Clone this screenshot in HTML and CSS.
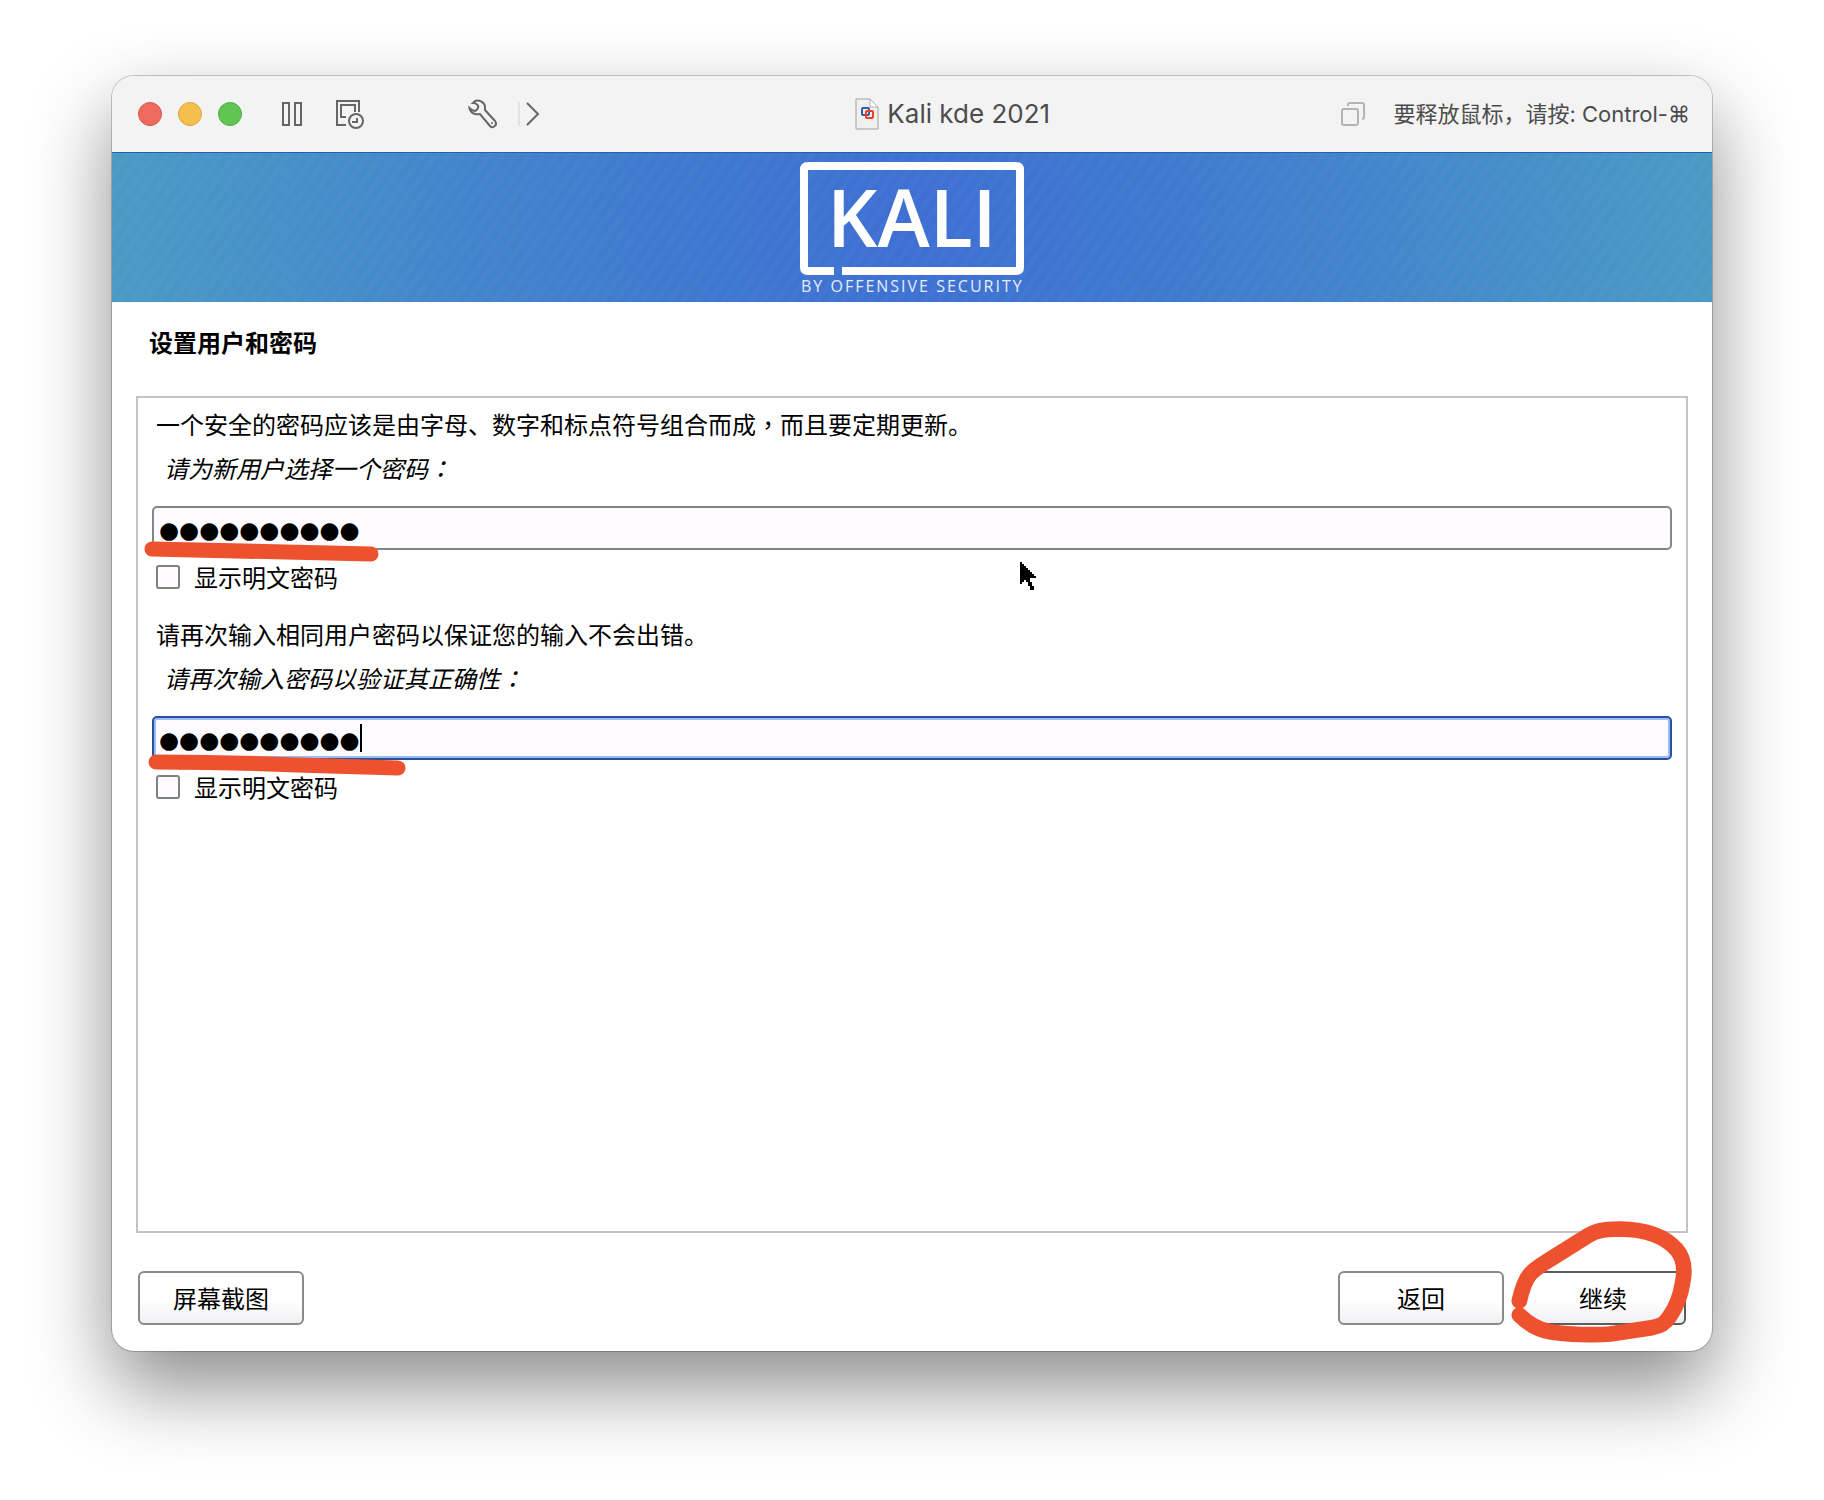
FILE: index.html
```html
<!DOCTYPE html>
<html lang="zh-CN">
<head>
    <meta charset="utf-8">
    <title>Kali kde 2021</title>
    <link rel="stylesheet" href="styles.css">
</head>
<body>
    <div class="window">
        <header class="titlebar">
            <div class="lights">
                <button class="light close" aria-label="关闭"></button>
                <button class="light minimize" aria-label="最小化"></button>
                <button class="light maximize" aria-label="缩放"></button>
            </div>
            <button class="tool pause" aria-label="暂停">
                <svg width="20" height="24" viewBox="0 0 20 24"><path d="M1 1h6v22H1zM13 1h6v22h-6z"/></svg>
            </button>
            <button class="tool snapshot" aria-label="快照">
                <svg width="30" height="30" viewBox="0 0 30 30">
                    <path d="M11 26H2V2h22v11M11 18H6V6h14v7"/>
                    <circle cx="21" cy="22" r="7"/>
                    <path d="M22 19v4h-5"/>
                </svg>
            </button>
            <button class="tool settings" aria-label="设置">
                <svg width="30" height="30" viewBox="0 0 30 30">
                    <path d="M7 2C11 .5 17 3 17 8v3L27 22c3 4-2 8-5 5L12 15c-5 1-10-1-10.500-6 2 2 5 4 7 2s2-4 1-5S8 4 5 4z"/>
                    <circle cx="24" cy="24" r="1" class="dot"/>
                </svg>
            </button>
            <button class="tool more" aria-label="更多">
                <svg width="14" height="24" viewBox="0 0 14 24"><path d="M1 1l11 11L1 23"/></svg>
            </button>
            <div class="title">
                <svg width="24" height="32" viewBox="0 0 24 32">
                    <path d="M1 1h14l8 8v22H1z" fill="#f0f0f0" stroke="#a0a0a0"/>
                    <path d="M15 1v8h8z" fill="#fff" stroke="#b0b0b0"/>
                    <rect x="7" y="10" width="7" height="7" rx="1" fill="none" stroke="#2d5fae" stroke-width="2"/>
                    <rect x="11" y="13" width="7" height="7" rx="1" fill="none" stroke="#ee4023" stroke-width="2"/>
                </svg>
                <span>Kali kde 2021</span>
            </div>
            <div class="hint">
                <svg width="24" height="24" viewBox="0 0 24 24">
                    <rect x="1" y="7" width="16" height="16" rx="2"/>
                    <path d="M7 4V3q0-2 2-2h12q2 0 2 2v12q0 2-2 2"/>
                </svg>
                <span>要释放鼠标，请按: Control-⌘</span>
            </div>
        </header>

        <div class="banner">
            <svg class="logo" width="226" height="141" viewBox="0 0 226 141" role="img" aria-label="Kali by Offensive Security">
                <path d="M35 110H9q-4 0-4-4V9q0-4 4-4h208q4 0 4 4v97q0 4-4 4H43" fill="none" stroke="#fff" stroke-width="8"/>
                <text x="28" y="86" class="logo-name">KALI</text>
                <text x="2" y="131" class="logo-sub">BY OFFENSIVE SECURITY</text>
            </svg>
        </div>

        <form class="installer">
            <h1>设置用户和密码</h1>
            <main class="panel">
                <section class="question">
                    <p>一个安全的密码应该是由字母、数字和标点符号组合而成<span class="mid" lang="zh-TW">，</span>而且要定期更新。</p>
                    <label class="prompt" for="pw">请为新用户选择一个密码<span class="mid" lang="zh-TW">：</span></label>
                    <div class="field">
                        <input class="password" id="pw" type="text" value="●●●●●●●●●●">
                        <svg class="mark" width="260" height="70" viewBox="-10 0 260 70"><path d="M0 43l219 5"/></svg>
                    </div>
                    <label class="check"><input type="checkbox">显示明文密码</label>
                </section>
                <section class="question">
                    <p>请再次输入相同用户密码以保证您的输入不会出错。</p>
                    <label class="prompt" for="pw2">请再次输入密码以验证其正确性<span class="mid" lang="zh-TW">：</span></label>
                    <div class="field">
                        <input class="password focused" id="pw2" type="text" value="●●●●●●●●●●">
                        <span class="caret"></span>
                        <svg class="mark" width="270" height="70" viewBox="-10 0 270 70"><path d="M4 46q70 0 141 3l101 3"/></svg>
                    </div>
                    <label class="check"><input type="checkbox">显示明文密码</label>
                </section>
            </main>
            <footer class="actions">
                <button type="button" class="btn">屏幕截图</button>
                <button type="button" class="btn back">返回</button>
                <div class="next">
                    <button type="button" class="btn primary">继续</button>
                    <svg class="ring" width="260" height="180" viewBox="0 0 780 540">
                        <path d="M118 306C126 270 136 242 150 226C165 208 190 194 215 178L325 109C345 97 360 91 420 90C500 91 555 112 590 152C614 180 615 215 608 250C602 290 585 330 567 355C555 375 540 382 515 386L390 405C350 409 260 407 210 398C175 392 145 375 118 348"/>
                    </svg>
                </div>
            </footer>
        </form>

        <svg class="cursor" width="16" height="28" viewBox="0 0 16 28">
            <path d="M0 0h2v2h2v2h2v2h2v2h2v2h2v2h2v2h2v2h-6v4h2v4h2v4h-4v-4H8v-4H6v-2H4v2H2v2H0z"/>
        </svg>
    </div>
</body>
</html>
```
FILE: styles.css
```css
* { box-sizing: border-box; }
body {
    margin: 0;
    min-height: 100vh;
    padding: 76px 112px 149px;
    display: flex;
    background: #fff;
    color: #000;
    font: 24px/32px "Noto Sans CJK SC", sans-serif;
    overflow: hidden;
}
button { font: inherit; color: inherit; padding: 0; }

.window {
    position: relative;
    flex: 1;
    display: flex;
    flex-direction: column;
    border-radius: 22px;
    background: #fff;
    box-shadow: 0 0 0 1px rgba(0, 0, 0, .2), 0 36px 80px rgba(0, 0, 0, .46);
}

/* title bar */
.titlebar {
    display: flex;
    align-items: center;
    height: 76px;
    padding: 0 22px 0 26px;
    border-radius: 22px 22px 0 0;
    background: #f3f3f3;
    color: #4c4c4c;
}
.lights { display: flex; gap: 16px; margin-right: 40px; }
.light { width: 24px; height: 24px; border-radius: 50%; border: 1px solid; }
.close { background: #ed6a5f; border-color: #d9574c; }
.minimize { background: #f5bf4f; border-color: #dba63c; }
.maximize { background: #61c554; border-color: #4fae42; }
.tool { display: flex; border: 0; background: none; }
.tool svg { fill: none; stroke: #666; stroke-width: 2; }
.tool .dot { fill: #666; stroke: none; }
.snapshot { margin-left: 33px; }
.settings { margin-left: 103px; }
.more { margin-left: 20px; padding-left: 6px; border-left: 2px solid #e2e2e2; }
.title {
    flex: 1;
    display: flex;
    justify-content: center;
    align-items: center;
    gap: 8px;
    margin-left: 24px;
    font: 26px/32px Inter, sans-serif;
}
.hint { display: flex; align-items: center; gap: 28px; font: 22px/32px Inter, "Noto Sans CJK SC", "DejaVu Sans", sans-serif; }
.hint svg { fill: none; stroke: #b4b4b4; stroke-width: 2; }

/* banner */
.banner {
    height: 150px;
    padding-top: 8px;
    display: flex;
    justify-content: center;
    border-top: 1px solid #2560ab;
    background:
        repeating-linear-gradient(125deg, rgba(255, 255, 255, .02) 0 5px, transparent 5px 11px),
        radial-gradient(circle farthest-side, #3e6fd3, #3f7bcf 35%, #468ec9 75%, #4a9ac5);
}
.logo-name { font: 600 79px "Open Sans", sans-serif; fill: #fff; }
.logo-sub { font: 16px "Open Sans", sans-serif; fill: #e6edf9; letter-spacing: 2px; }

/* installer */
.installer { flex: 1; display: flex; flex-direction: column; padding: 24px 24px 26px; }
h1 { margin: 0 13px 38px; font-size: 24px; line-height: 32px; }
.panel { flex: 1; border: 2px solid #c4c4c4; padding: 10px 14px; }
.question { height: 210px; }
.question p { margin: 0 4px 12px; }
.prompt { display: block; margin: 0 12px 22px; font-style: italic; }
.mid { font-family: "Noto Sans CJK TC", sans-serif; }
.field { position: relative; }
.password {
    display: block;
    width: 100%;
    height: 44px;
    padding: 4px 5px 0;
    border: 2px solid #858585;
    border-radius: 5px;
    background: #fdfbff;
    color: #000;
    font: 23px/32px "DejaVu Sans", sans-serif;
    outline: 0;
}
.focused { border-color: #2b509b; box-shadow: inset 0 0 0 2px #98bdf7; }
.caret { position: absolute; left: 208px; top: 8px; width: 2px; height: 28px; background: #000; }
.check { display: flex; align-items: center; gap: 14px; margin: 11px 4px 0; }
.check input {
    appearance: none;
    width: 24px;
    height: 24px;
    margin: 0;
    border: 2px solid #808080;
    border-radius: 3px;
    background: #fdfbff;
}

.actions { display: flex; gap: 16px; padding: 38px 2px 0; }
.btn {
    width: 166px;
    height: 54px;
    border: 2px solid #8a8a8a;
    border-radius: 6px;
    background: linear-gradient(#fff 55%, #f0eff2);
}
.back { margin-left: auto; }
.next { position: relative; }
.primary { border-color: #5c5c5c; }

/* red pen marks */
.mark, .ring { position: absolute; fill: none; stroke: #ee512d; stroke-linecap: round; stroke-linejoin: round; pointer-events: none; }
.mark { left: -10px; top: 0; stroke-width: 15; }
.ring { left: -40px; top: -72px; stroke-width: 47; }
.cursor { position: absolute; left: 908px; top: 486px; }
```
